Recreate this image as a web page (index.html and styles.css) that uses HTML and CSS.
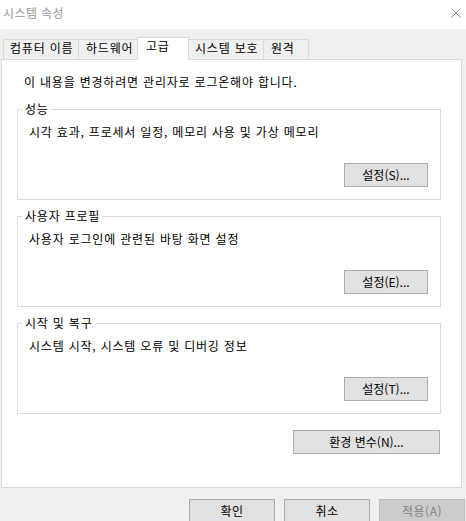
FILE: index.html
```html
<!DOCTYPE html>
<html lang="ko">
<head>
  <meta charset="UTF-8" />
  <title>시스템 속성</title>
  <link rel="stylesheet" href="styles.css">
</head>
<body>

  <!-- 제목 표시줄 -->
  <div class="title-bar">
    <div class="title-text">시스템 속성</div>
    <button class="close-btn" aria-label="닫기">
      <svg width="10" height="10" viewBox="0 0 10 10">
        <path d="M0.5 0.5 L9.5 9.5 M9.5 0.5 L0.5 9.5" stroke="#8c8c8c" stroke-width="1" fill="none" />
      </svg>
    </button>
  </div>

  <div class="dialog">
    <div class="tabs">
      <div class="tab tab-name">컴퓨터 이름</div>
      <div class="tab tab-hw">하드웨어</div>
      <div class="tab tab-adv active">고급</div>
      <div class="tab tab-prot">시스템 보호</div>
      <div class="tab tab-remote">원격</div>
    </div>

    <div class="panel">
      <div class="intro">이 내용을 변경하려면 관리자로 로그온해야 합니다.</div>

      <div class="group">
        <span class="legend">성능</span>
        <div class="group-desc">시각 효과, 프로세서 일정, 메모리 사용 및 가상 메모리</div>
        <button class="btn group-btn">설정(S)...</button>
      </div>

      <div class="group">
        <span class="legend">사용자 프로필</span>
        <div class="group-desc">사용자 로그인에 관련된 바탕 화면 설정</div>
        <button class="btn group-btn">설정(E)...</button>
      </div>

      <div class="group">
        <span class="legend">시작 및 복구</span>
        <div class="group-desc">시스템 시작, 시스템 오류 및 디버깅 정보</div>
        <button class="btn group-btn">설정(T)...</button>
      </div>

      <button class="btn env-btn">환경 변수(N)...</button>
    </div>

    <div class="footer-buttons">
      <button class="btn footer-btn">확인</button>
      <button class="btn footer-btn">취소</button>
      <button class="btn footer-btn" disabled>적용(A)</button>
    </div>
  </div>

</body>
</html>
```

FILE: styles.css
```css
body {
  margin: 0;
  padding: 0;
  background-color: #f0f0f0;
  font-family: 'Noto Sans CJK KR', 'Noto Sans', sans-serif;
  font-size: 12px;
  line-height: 16px;
  letter-spacing: 0.8px; /* 맑은 고딕 폭에 맞춤 */
  color: #000;
  overflow: hidden;
}

/* 제목 표시줄 */
.title-bar {
  height: 29px;
  background-color: #fff;
  display: flex;
  justify-content: space-between;
  align-items: flex-start;
}

.title-text {
  margin: 5px 0 0 3px;
  color: #999;
  letter-spacing: 0.4px;
}

.close-btn {
  background: none;
  border: none;
  padding: 0;
  margin: 8px 5px 0 0;
  width: 10px;
  height: 10px;
  display: block;
}

.close-btn svg {
  display: block;
}

/* 탭 */
.tabs {
  display: flex;
  align-items: flex-end;
  margin: 8px 0 0 3px;
  height: 22px;
}

.tab {
  box-sizing: border-box;
  height: 20px;
  border: 1px solid #d9d9d9;
  border-bottom: none;
  background-color: #f0f0f0;
  margin-left: -1px;
  padding-left: 6px;
  white-space: nowrap;
}

.tab:first-child {
  margin-left: 0;
}

.tab.active {
  height: 23px;
  background-color: #fff;
  margin-bottom: -1px;
  position: relative;
  z-index: 1;
  padding-left: 8px;
}

.tab-name { width: 76px; }
.tab-hw { width: 60px; padding-left: 7px; }
.tab-adv { width: 52px; }
.tab-prot { width: 76px; }
.tab-remote { width: 46px; padding-left: 7px; }

/* 탭 패널 */
.panel {
  box-sizing: border-box;
  width: 461px;
  height: 429px;
  margin-left: 1px;
  background-color: #fff;
  border: 1px solid #d9d9d9;
  display: flex;
  flex-direction: column;
}

.intro {
  margin: 14px 0 0 22px;
}

.group {
  box-sizing: border-box;
  width: 424px;
  height: 91px;
  margin: 16px 0 0 15px;
  border: 1px solid #dcdcdc;
  display: flex;
  flex-direction: column;
  align-items: flex-start;
}

.intro + .group {
  margin-top: 19px;
}

.legend {
  margin: -9px 0 0 4px;
  padding: 0 2px 0 3px;
  background-color: #fff;
  white-space: nowrap;
}

.group-desc {
  margin: 7px 0 0 11px;
  white-space: nowrap;
}

/* 버튼 */
.btn {
  box-sizing: border-box;
  height: 24px;
  background-color: #e1e1e1;
  border: 1px solid #adadad;
  font-family: inherit;
  font-size: 12px;
  line-height: 16px;
  letter-spacing: 0;
  color: #000;
  padding: 0;
  border-radius: 0;
}

.btn:disabled {
  background-color: #cccccc;
  border-color: #bfbfbf;
  color: #838383;
}

.group-btn {
  width: 84px;
  align-self: flex-end;
  margin: auto 12px 12px 0;
}

.env-btn {
  width: 147px;
  align-self: flex-end;
  margin: 16px 21px 0 0;
}

.footer-buttons {
  display: flex;
  gap: 9px;
  margin: 11px 0 0 189px;
}

.footer-btn {
  width: 86px;
  letter-spacing: 0.5px;
}
```
